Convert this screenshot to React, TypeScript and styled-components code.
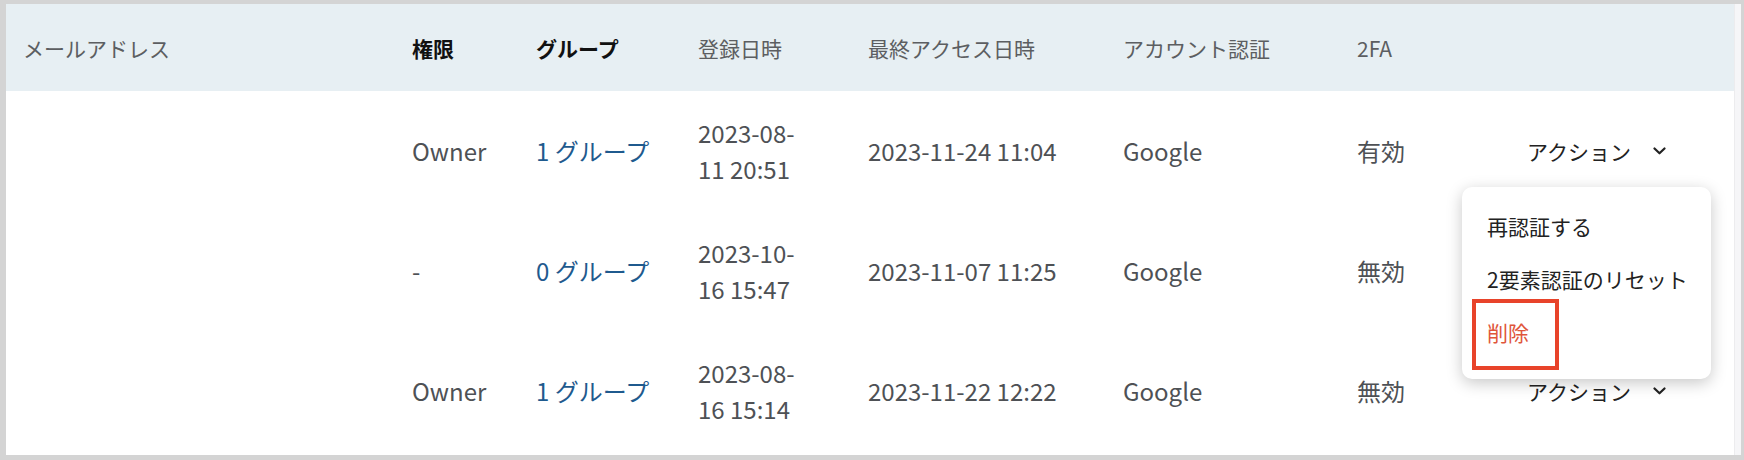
import React from 'react';
import styled, { createGlobalStyle } from 'styled-components';

const COLS = '389px 124px 162px 170px 255px 234px 170px 1fr';
const FONT = '"Noto Sans CJK JP", "Noto Sans", sans-serif';

type Member = {
  role: string;
  groups: number;
  registered: string;
  lastAccess: string;
  auth: string;
  twoFactor: string;
  showAction: boolean;
};

const MEMBERS: Member[] = [
  { role: 'Owner', groups: 1, registered: '2023-08-11 20:51', lastAccess: '2023-11-24 11:04', auth: 'Google', twoFactor: '有効', showAction: true },
  { role: '-', groups: 0, registered: '2023-10-16 15:47', lastAccess: '2023-11-07 11:25', auth: 'Google', twoFactor: '無効', showAction: false },
  { role: 'Owner', groups: 1, registered: '2023-08-16 15:14', lastAccess: '2023-11-22 12:22', auth: 'Google', twoFactor: '無効', showAction: true },
];

const GlobalStyle = createGlobalStyle`
  html, body {
    margin: 0;
    padding: 0;
    background: #d4d4d4;
    font-family: ${FONT};
  }
  * {
    box-sizing: border-box;
  }
`;

const Chevron: React.FC = () => (
  <svg width="13" height="8" viewBox="0 0 13 8" fill="none">
    <path d="M1.5 1.5l5 4.8 5-4.8" stroke="#222" strokeWidth="2.2" strokeLinecap="round" strokeLinejoin="round" />
  </svg>
);

export default function App() {
  return (
    <>
      <GlobalStyle />
      <Frame>
        <Panel>
          <Table>
            <HeaderRow>
              <HeadCell>メールアドレス</HeadCell>
              <HeadCell $strong>権限</HeadCell>
              <HeadCell $strong>グループ</HeadCell>
              <HeadCell>登録日時</HeadCell>
              <HeadCell>最終アクセス日時</HeadCell>
              <HeadCell>アカウント認証</HeadCell>
              <HeadCell>2FA</HeadCell>
              <HeadCell />
            </HeaderRow>
            {MEMBERS.map((m, i) => (
              <Row key={i}>
                <Cell />
                <Cell>{m.role}</Cell>
                <Cell>
                  <GroupLink href="#">{m.groups} グループ</GroupLink>
                </Cell>
                <Cell>
                  <DateText>{m.registered}</DateText>
                </Cell>
                <Cell>{m.lastAccess}</Cell>
                <Cell>{m.auth}</Cell>
                <Cell>{m.twoFactor}</Cell>
                <ActionCell>
                  {m.showAction && (
                    <ActionButton>
                      アクション <Chevron />
                    </ActionButton>
                  )}
                  {i === 0 && (
                    <Menu>
                      <MenuItem>再認証する</MenuItem>
                      <MenuItem>2要素認証のリセット</MenuItem>
                      <DeleteItem>削除</DeleteItem>
                    </Menu>
                  )}
                </ActionCell>
              </Row>
            ))}
          </Table>
          <ScrollTrack />
        </Panel>
      </Frame>
    </>
  );
}

const Frame = styled.div`
  height: 460px;
  padding: 4px 3px 5px 6px;
`;

const Panel = styled.div`
  display: flex;
  height: 100%;
  background: #ffffff;
`;

const Table = styled.div`
  flex: 1;
  display: flex;
  flex-direction: column;
`;

const HeaderRow = styled.div`
  display: grid;
  grid-template-columns: ${COLS};
  align-items: center;
  height: 87px;
  background: #e7eff3;
`;

const HeadCell = styled.div<{ $strong?: boolean }>`
  padding: 0 17px;
  font-size: 21px;
  font-weight: ${(p) => (p.$strong ? 700 : 400)};
  color: ${(p) => (p.$strong ? '#111111' : '#5c5e61')};
  white-space: nowrap;
`;

const Row = styled.div`
  display: grid;
  grid-template-columns: ${COLS};
  align-items: center;
  height: 120px;
`;

const Cell = styled.div`
  padding: 0 17px;
  font-size: 24px;
  line-height: 36px;
  color: #4e5155;
`;

const ActionCell = styled(Cell)`
  position: relative;
  align-self: stretch;
  display: flex;
  align-items: center;
`;

const GroupLink = styled.a`
  color: #1f5a8e;
  text-decoration: none;
  white-space: nowrap;
`;

const DateText = styled.span`
  display: block;
  max-width: 112px;
`;

const ActionButton = styled.button`
  display: flex;
  align-items: center;
  gap: 22px;
  margin: 0;
  padding: 0;
  border: 0;
  background: none;
  font-family: ${FONT};
  font-size: 21px;
  color: #222222;
  cursor: pointer;
`;

const Menu = styled.ul`
  position: absolute;
  top: 96px;
  right: 23px;
  z-index: 2;
  width: 249px;
  margin: 0;
  padding: 12px 0 21px;
  list-style: none;
  background: #ffffff;
  border-radius: 10px;
  box-shadow: 0 4px 16px rgba(0, 0, 0, 0.22);
`;

const MenuItem = styled.li`
  display: flex;
  align-items: center;
  height: 53px;
  padding: 0 25px;
  font-size: 21px;
  color: #222222;
  white-space: nowrap;
`;

const DeleteItem = styled(MenuItem)`
  position: relative;
  color: #e0553a;

  &::after {
    content: '';
    position: absolute;
    left: 10px;
    top: -6px;
    width: 79px;
    height: 63px;
    border: 4px solid #e8432a;
  }
`;

const ScrollTrack = styled.div`
  width: 7px;
  background: #f6f6f8;
  border-left: 1px solid #ececee;
`;
